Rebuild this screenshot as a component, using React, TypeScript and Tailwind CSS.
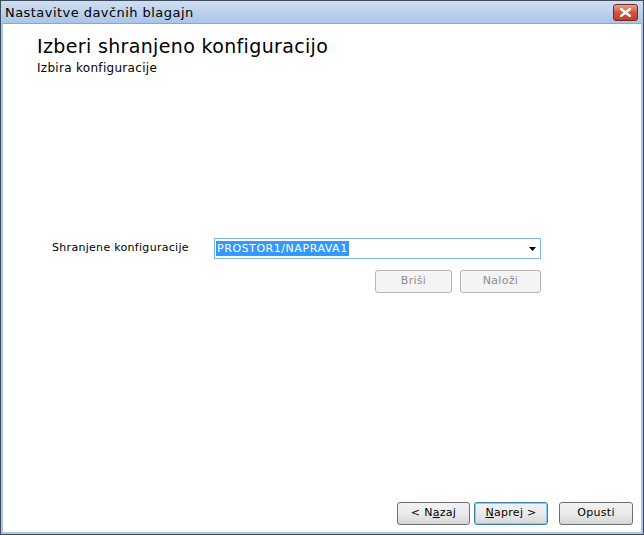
const font = { fontFamily: '"DejaVu Sans", Verdana, sans-serif' };

function WinButton({
  children,
  disabled,
  focused,
  className = '',
}: {
  children: React.ReactNode;
  disabled?: boolean;
  focused?: boolean;
  className?: string;
}) {
  if (disabled) {
    return (
      <div
        className={`flex h-[23px] items-center justify-center rounded-[3px] border border-[#b5b5b5] bg-[#f4f4f4] text-[11px] tracking-[0.3px] text-[#8d8d8d] ${className}`}
      >
        {children}
      </div>
    );
  }
  return (
    <div
      className={`flex h-[23px] items-center justify-center rounded-[3px] border ${
        focused ? 'border-[#3c7fb1] shadow-[inset_0_0_0_1px_#7dd0f4]' : 'border-[#707070]'
      } bg-gradient-to-b from-[#f2f2f2] via-[#ebebeb] to-[#d6d6d6] text-[11px] tracking-[0.3px] text-black ${className}`}
    >
      {children}
    </div>
  );
}

export default function App() {
  return (
    <div className="h-[535px] w-[644px] bg-white" style={font}>
      <div className="flex h-full w-full flex-col border border-[#3f4c5c] bg-[#abc6e8]">
        {/* title bar */}
        <div className="flex h-[22px] shrink-0 items-center justify-between bg-gradient-to-b from-[#cfdff2] to-[#aac5e8] pl-[4px] pr-[5px]">
          <span className="text-[13px] leading-none tracking-[0.45px] text-black">Nastavitve davčnih blagajn</span>
          <div className="flex h-[17px] w-[25px] items-center justify-center rounded-[3px] border border-[#6b2d24] bg-gradient-to-b from-[#e8a192] via-[#d4533e] to-[#c23f2b]">
            <svg width="11" height="9" viewBox="0 0 11 9">
              <path
                d="M1 1 L10 8 M10 1 L1 8"
                stroke="#fff"
                strokeWidth="2.4"
                strokeLinecap="square"
              />
            </svg>
          </div>
        </div>

        {/* client area */}
        <div className="mx-[2px] mb-[2px] flex flex-1 flex-col border-t border-[#8aa8cc] bg-white">
          <div className="pl-[34px] pt-[10px]">
            <h1 className="text-[19px] leading-[24px] tracking-[0.35px] text-black">Izberi shranjeno konfiguracijo</h1>
            <p className="mt-[3px] text-[12px] leading-[15px] tracking-[0.3px] text-black">Izbira konfiguracije</p>
          </div>

          <div className="mt-[162px] flex items-center pl-[49px]">
            <span className="w-[162px] text-[11px] tracking-[0.3px] text-black">Shranjene konfiguracije</span>
            <div className="flex h-[21px] w-[327px] items-center border border-[#7eb4ea] pl-[1px] pr-[3px]">
              <span className="bg-[#3399ff] px-[1px] text-[11px] leading-[15px] tracking-[0.55px] text-white">
                PROSTOR1/NAPRAVA1
              </span>
              <div className="flex-1" />
              <svg width="7" height="4" viewBox="0 0 7 4" className="mr-[1px]">
                <path d="M0 0 H7 L3.5 4 Z" fill="#000" />
              </svg>
            </div>
          </div>

          <div className="mt-[11px] flex justify-start gap-[8px] pl-[372px]">
            <WinButton disabled className="w-[77px]">
              Briši
            </WinButton>
            <WinButton disabled className="w-[81px]">
              Naloži
            </WinButton>
          </div>

          <div className="flex-1" />

          <div className="mb-[7px] flex pl-[394px]">
            <WinButton className="w-[73px]">
              &lt; N<span className="underline">a</span>zaj
            </WinButton>
            <WinButton focused className="ml-[4px] w-[74px]">
              <span className="underline">N</span>aprej &gt;
            </WinButton>
            <WinButton className="ml-[11px] w-[74px]">Opusti</WinButton>
          </div>
        </div>
      </div>
    </div>
  );
}
